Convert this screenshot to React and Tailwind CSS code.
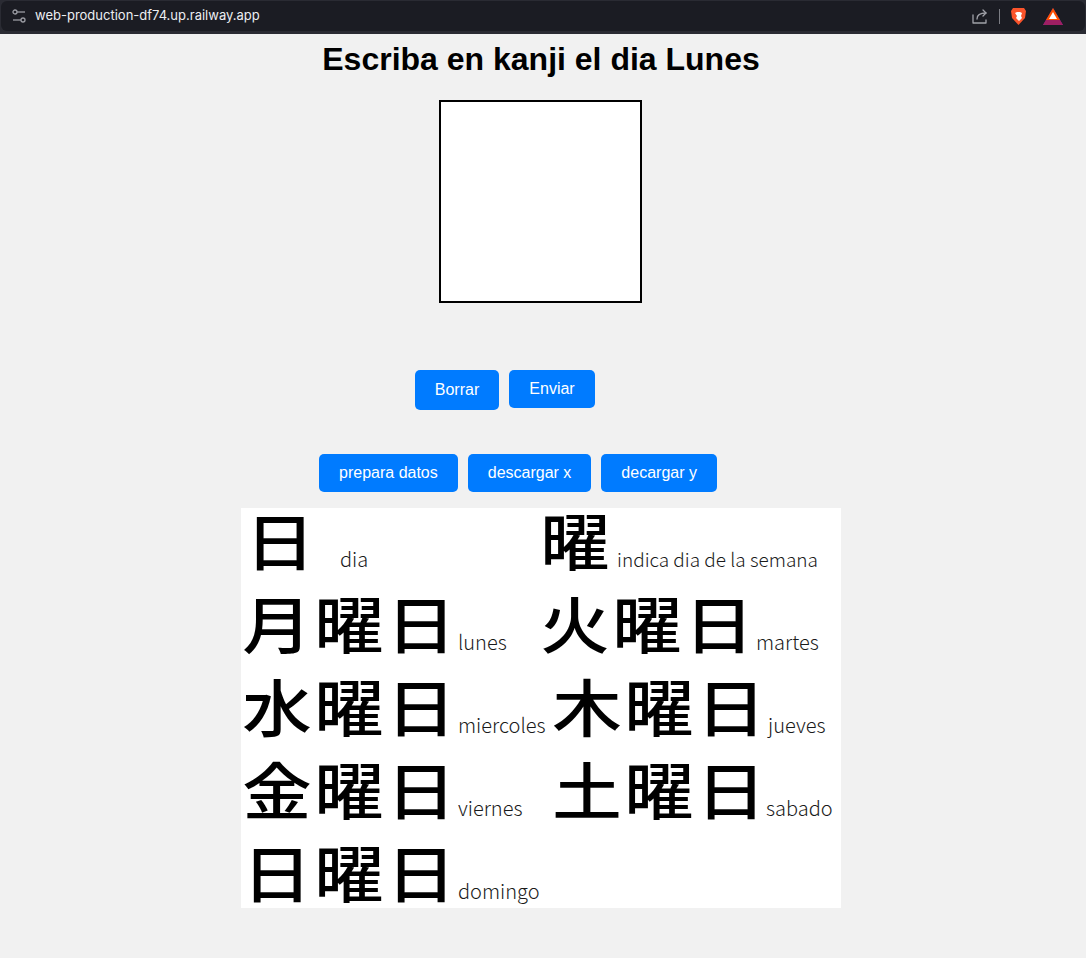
import React from "react";

// one line of the kanji chart: each kanji sits in a 72px cell, stretched a little like the source image
const Group = ({ kanji, label, kanjiClass = "", labelClass = "ml-[1px]", small = false }) => (
  <div className="flex items-end">
    <div className={`flex ${kanjiClass}`}>
      {kanji.split("").map((k, i) => (
        <span key={i} className="w-[72px] text-center text-[62px] leading-[62px] font-medium text-black scale-x-[1.12]">
          {k}
        </span>
      ))}
    </div>
    <span
      className={`${small ? "text-[19px] pb-[2px]" : "text-[20px] pb-[1px]"} leading-none font-light text-[#1a1a1a] ${labelClass}`}
    >
      {label}
    </span>
  </div>
);

const App = () => {
  return (
    <div className="min-h-[958px] bg-[#f1f1f1]" style={{ fontFamily: "'Liberation Sans', Arial, sans-serif" }}>
      {/* browser bar */}
      <div className="h-[34px] bg-[#2a2b33] px-[1px] pt-[1px] pb-[3px]">
        <div className="h-full rounded-[6px] bg-[#1b1c23] flex items-center pl-[11px] pr-[22px]">
          <svg width="14" height="14" viewBox="0 0 14 14" fill="none" stroke="#9b9ca3" strokeWidth="1.3">
            <circle cx="3" cy="3" r="2" />
            <path d="M5 3h8" />
            <circle cx="11" cy="11" r="2" />
            <path d="M1 11h8" />
          </svg>
          <span className="ml-[9px] text-[13px] text-[#eceef2]" style={{ fontFamily: "Inter, 'Noto Sans', sans-serif" }}>
            web-production-df74.up.railway.app
          </span>
          <div className="flex-1" />
          <svg width="18" height="16" viewBox="0 0 18 16" fill="none" stroke="#a0a1a8" strokeWidth="1.3" strokeLinecap="round" strokeLinejoin="round">
            <path d="M2 7v8h13v-3" />
            <path d="M6 11c0-4 3-6 9-6" />
            <path d="M12 2l3 3-3 3" />
          </svg>
          <div className="ml-[10px] w-[1px] h-[15px] bg-[#7b7c83]" />
          <svg className="ml-[10px]" width="17" height="19" viewBox="0 0 17 19">
            <path d="M3 1h11l2 3-1 7-6.5 7L2 11 1 4z" fill="#fb542b" />
            <path d="M5 6l2-1h3l2 1-1 3 1 2-3 3-3-3 1-2z" fill="#fff" />
          </svg>
          <svg className="ml-[16px]" width="20" height="17" viewBox="0 0 20 17">
            <path d="M10 0L20 17H0z" fill="#662d91" />
            <path d="M10 0L17 12H3z" fill="#ff5000" />
            <path d="M10 4l4 7H6z" fill="#fff" />
            <path d="M3 12h14l3 5H0z" fill="#9e1f63" />
          </svg>
        </div>
      </div>

      {/* page content */}
      <div className="flex flex-col items-center pr-[4px]">
        <h1 className="mt-[7px] text-[32px] leading-[37px] font-bold text-black">Escriba en kanji el dia Lunes</h1>

        <div className="mt-[22px] ml-[-2px] w-[203px] h-[203px] border-2 border-black bg-white" />

        <div className="mt-[67px] flex items-start gap-[10px] pr-[72px]">
          <button className="w-[84px] h-[40px] rounded-[5px] bg-[#007bff] text-white text-[16px]">Borrar</button>
          <button className="w-[86px] h-[38px] rounded-[5px] bg-[#007bff] text-white text-[16px]">Enviar</button>
        </div>

        <div className="mt-[44px] flex gap-[10px] pr-[46px]">
          <button className="h-[38px] px-5 rounded-[5px] bg-[#007bff] text-white text-[16px]">prepara datos</button>
          <button className="h-[38px] px-5 rounded-[5px] bg-[#007bff] text-white text-[16px]">descargar x</button>
          <button className="h-[38px] px-5 rounded-[5px] bg-[#007bff] text-white text-[16px]">decargar y</button>
        </div>

        {/* kanji chart */}
        <div
          className="mt-[16px] w-[600px] h-[400px] bg-white flex flex-col gap-[21px]"
          style={{ fontFamily: "'Noto Sans CJK JP', sans-serif" }}
        >
          <div className="flex">
            <div className="w-[298px]">
              <Group kanji="日" label="dia" kanjiClass="pl-[3px]" labelClass="ml-[24px]" />
            </div>
            <Group kanji="曜" label="indica dia de la semana" labelClass="ml-[6px]" small />
          </div>
          <div className="flex">
            <div className="w-[298px]">
              <Group kanji="月曜日" label="lunes" />
            </div>
            <Group kanji="火曜日" label="martes" />
          </div>
          <div className="flex">
            <div className="w-[310px]">
              <Group kanji="水曜日" label="miercoles" />
            </div>
            <Group kanji="木曜日" label="jueves" />
          </div>
          <div className="flex">
            <div className="w-[310px]">
              <Group kanji="金曜日" label="viernes" />
            </div>
            <Group kanji="土曜日" label="sabado" labelClass="-ml-[1px]" />
          </div>
          <div className="flex">
            <Group kanji="日曜日" label="domingo" />
          </div>
        </div>
      </div>
    </div>
  );
};

export default App;
